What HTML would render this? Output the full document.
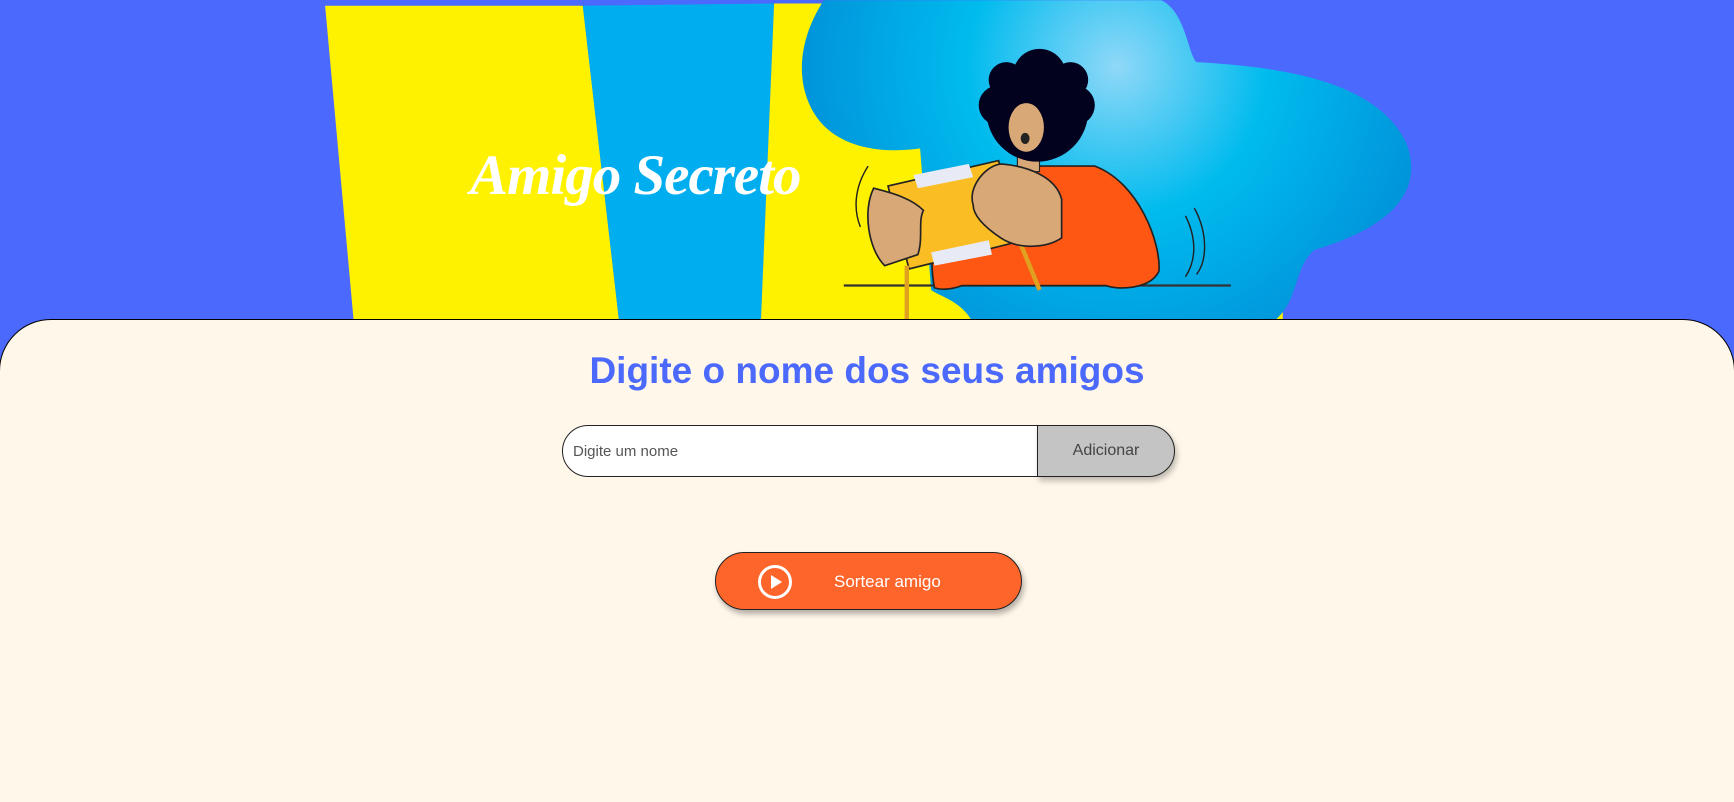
<!DOCTYPE html>
<html><head><meta charset="utf-8"><style>
*{margin:0;padding:0;box-sizing:border-box}
html{width:1734px;height:802px;overflow:hidden}
body{width:1734px;height:802px;overflow:hidden;background:#4b69fd;font-family:"Liberation Sans",sans-serif;position:relative}
#hdr{position:absolute;left:0;top:0;width:1734px;height:330px}
.title{position:absolute;left:470px;top:143px;font-family:"Liberation Serif",serif;font-style:italic;font-weight:bold;font-size:57px;color:#fff;letter-spacing:-1px}
.panel{position:absolute;left:-1px;top:319px;width:1736px;height:490px;background:#fff7ea;border:1px solid #000;border-radius:52px 52px 0 0}
h1{position:absolute;left:0;width:1734px;top:350px;text-align:center;font-size:37px;font-weight:bold;color:#4b69fd}
.inp{position:absolute;left:562px;top:425px;width:476px;height:52px;background:#fff;border:1.5px solid #222;border-radius:26px 0 0 26px;font-size:15px;color:#555;padding:17px 0 0 10px}
.add{position:absolute;left:1037px;top:425px;width:138px;height:52px;background:#c4c4c4;border:1.5px solid #222;border-radius:0 26px 26px 0;font-size:16px;color:#444;text-align:center;line-height:49px;box-shadow:2px 4px 6px rgba(0,0,0,.25)}
.sort{position:absolute;left:715px;top:552px;width:307px;height:58px;background:#fe652b;border:1.5px solid #222;border-radius:29px;box-shadow:2px 4px 6px rgba(0,0,0,.3);color:#fff;font-size:17px}
.sort span{position:absolute;left:118px;top:19px}
.sort svg{position:absolute;left:41px;top:11px}
</style></head><body>
<svg id="hdr" viewBox="0 0 1568 298" width="1734" height="330">
<defs><radialGradient id="g" cx="1010" cy="60" r="300" gradientUnits="userSpaceOnUse"><stop offset="0" stop-color="#8fd8f8"/><stop offset=".45" stop-color="#00bbee"/><stop offset="1" stop-color="#0090d8"/></radialGradient></defs>
<polygon points="294,5 527,5 560,292 320,292" fill="#fff200"/>
<polygon points="527,5 700,3 688,292 560,292" fill="#00aeef"/>
<polygon points="700,3 760,3 760,292 688,292" fill="#fff200"/>
<rect x="740" y="100" width="420" height="192" fill="#fff200"/>
<path d="M745,0 L1050,0 C1072,10 1074,48 1082,56 C1150,60 1245,70 1272,130 C1292,185 1235,212 1188,226 C1168,245 1176,272 1150,292 L880,292 C870,272 850,268 842,262 L832,134 C790,140 755,130 738,105 C718,75 722,35 745,0 Z" fill="url(#g)"/>
<line x1="763" y1="258" x2="1113" y2="258" stroke="#333" stroke-width="2"/>
<path d="M845,260 C835,210 860,160 900,150 L990,150 C1030,165 1050,220 1048,245 C1040,262 1010,262 1000,258 L870,258 C860,262 850,262 845,260Z" fill="#fd5713" stroke="#222" stroke-width="1.5"/>
<rect x="920" y="125" width="20" height="30" fill="#d9a877" stroke="#222"/>
<circle cx="938" cy="100" r="46" fill="#02021f"/>
<circle cx="903" cy="95" r="18" fill="#02021f"/><circle cx="972" cy="95" r="18" fill="#02021f"/><circle cx="940" cy="68" r="24" fill="#02021f"/><circle cx="910" cy="72" r="16" fill="#02021f"/><circle cx="968" cy="72" r="16" fill="#02021f"/>
<ellipse cx="928" cy="115" rx="16" ry="22" fill="#d9a877"/>
<ellipse cx="927" cy="125" rx="4" ry="5" fill="#222"/>
<polygon points="803,168 903,145 922,218 822,243" fill="#fbbd24" stroke="#222" stroke-width="1.5"/>
<polygon points="826,158 876,148 880,160 830,170" fill="#e8ebf5"/>
<polygon points="842,228 894,217 897,230 845,240" fill="#e8ebf5"/>
<line x1="820" y1="240" x2="820" y2="290" stroke="#e0a020" stroke-width="4"/>
<line x1="922" y1="218" x2="940" y2="262" stroke="#e0a020" stroke-width="4"/>
<path d="M790,170 C780,190 785,225 800,240 L830,230 C835,215 830,200 835,190 C825,180 810,175 790,170Z" fill="#d9a877" stroke="#222" stroke-width="1.5"/>
<path d="M880,185 C875,170 890,150 905,148 C930,150 955,160 960,180 L960,215 C945,225 920,225 905,215 C890,205 880,195 880,185Z" fill="#d9a877" stroke="#222" stroke-width="1.5"/>
<path d="M785,150 C772,170 772,190 778,205 M1072,195 C1082,215 1082,235 1072,250 M1080,188 C1092,210 1092,235 1082,248" fill="none" stroke="#222" stroke-width="1.3"/>
</svg>
<div class="title">Amigo Secreto</div>
<div class="panel"></div>
<h1>Digite o nome dos seus amigos</h1>
<div class="inp">Digite um nome</div>
<div class="add">Adicionar</div>
<div class="sort"><svg width="36" height="36" viewBox="0 0 36 36"><circle cx="18" cy="18" r="15.5" fill="none" stroke="#fff" stroke-width="3"/><path d="M14 11 L25 18 L14 25Z" fill="#fff"/></svg><span>Sortear amigo</span></div>
</body></html>
